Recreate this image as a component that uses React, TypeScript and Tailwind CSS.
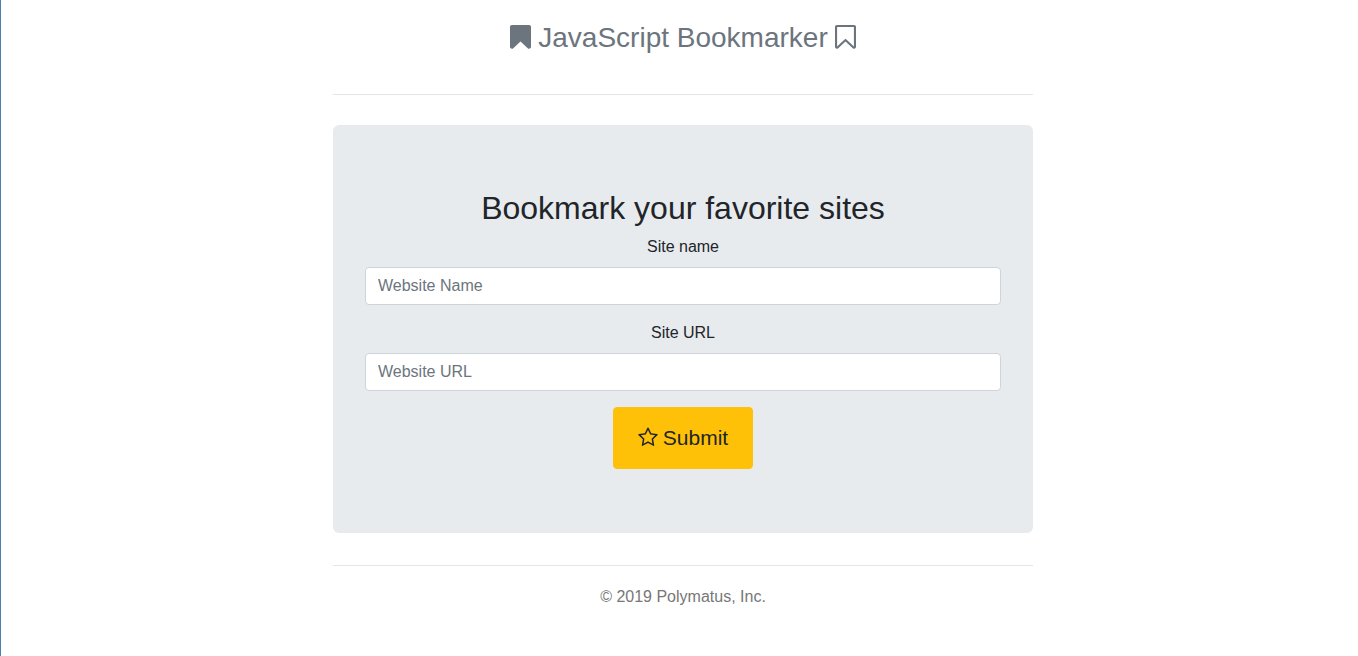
import React from "react";

const BOOKMARK_OUTLINE =
  "M1420 128q23 0 44 9 33 13 52.5 41t19.5 62v1289q0 34-19.5 62t-52.5 41q-19 8-44 8-48 0-83-32l-441-424-441 424q-36 33-83 33-23 0-44-9-33-13-52.5-41t-19.5-62v-1289q0-34 19.5-62t52.5-41q21-9 44-9h1048z";

function BookmarkIcon({ hollow = false }: { hollow?: boolean }) {
  return (
    <svg
      viewBox="256 0 1280 1792"
      preserveAspectRatio="none"
      className="mb-0.5 h-7 w-[21px]"
      fill="currentColor"
      fillRule="evenodd"
      aria-hidden="true"
    >
      <path
        d={
          hollow
            ? BOOKMARK_OUTLINE + "M1408 256h-1024v1242l423-406 89-85 89 85 423 406v-1242z"
            : BOOKMARK_OUTLINE
        }
      />
    </svg>
  );
}

function StarIcon() {
  return (
    <svg viewBox="64 0 1664 1792" className="mb-0.5 h-[21px] w-5" fill="currentColor" aria-hidden="true">
      <path d="M1201 1004l306-297-422-62-189-382-189 382-422 62 306 297-73 421 378-199 377 199zm527-357q0 22-26 48l-363 354 86 500q1 7 1 20 0 50-41 50-19 0-40-12l-449-236-449 236q-22 12-40 12-21 0-31.5-14.5t-10.5-35.5q0-6 2-20l86-500-364-354q-25-27-25-48 0-37 56-46l502-73 225-455q19-41 49-41t49 41l225 455 502 73q56 9 56 46z" />
    </svg>
  );
}

function Field({ id, label, placeholder }: { id: string; label: string; placeholder: string }) {
  return (
    <div className="mb-4">
      <label htmlFor={id} className="mb-2 block">
        {label}
      </label>
      <input
        id={id}
        type="text"
        placeholder={placeholder}
        className="block h-[38px] w-full rounded border border-[#ced4da] bg-white px-3 text-base text-[#495057] placeholder:text-[#6c757d]"
      />
    </div>
  );
}

export default function App() {
  return (
    <div className="min-h-screen border-l border-[#4682a9] bg-white pl-[7px] font-['Liberation_Sans',Arial,sans-serif] text-base text-[#212529]">
      <div className="mx-auto max-w-[700px] pt-5">
        <header className="border-b border-[#e5e5e5] pb-[38px]">
          <h3 className="flex items-center justify-center gap-[7px] text-[28px] leading-9 text-[#6c757d]">
            <BookmarkIcon />
            JavaScript Bookmarker
            <BookmarkIcon hollow />
          </h3>
        </header>

        <main className="mt-[30px] mb-8 rounded-md bg-[#e8ebee] px-8 py-16 text-center">
          <h2 className="mb-2 text-[32px] leading-[38px]">Bookmark your favorite sites</h2>
          <form onSubmit={(event) => event.preventDefault()}>
            <Field id="siteName" label="Site name" placeholder="Website Name" />
            <Field id="siteUrl" label="Site URL" placeholder="Website URL" />
            <button
              type="submit"
              className="mx-auto flex h-[62px] items-center gap-[5px] rounded border border-[#ffc107] bg-[#ffc107] px-6 text-[21px]"
            >
              <StarIcon />
              Submit
            </button>
          </form>
        </main>

        <footer className="border-t border-[#e5e5e5] pt-[19px] text-center text-[#777777]">
          <p>© 2019 Polymatus, Inc.</p>
        </footer>
      </div>
    </div>
  );
}
